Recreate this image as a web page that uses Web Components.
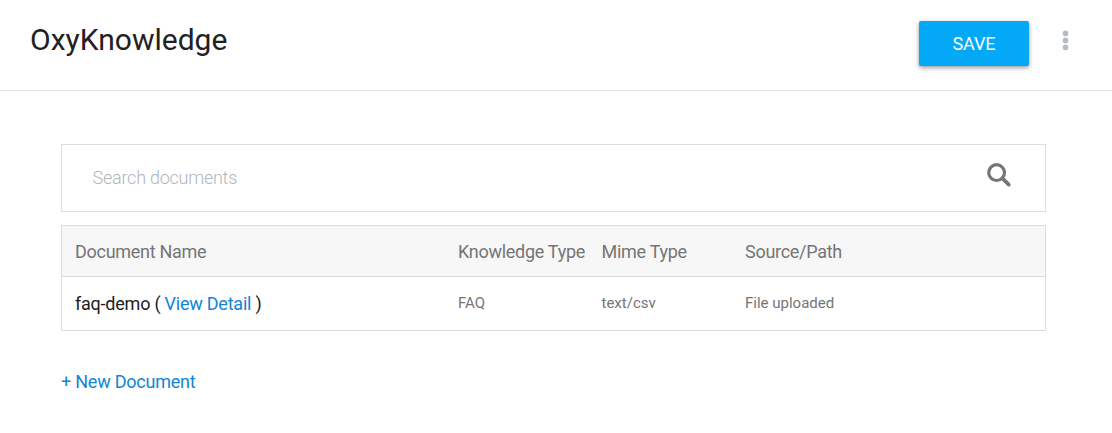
<!DOCTYPE html>
<html lang="en">
<head>
<meta charset="utf-8">
<title>OxyKnowledge</title>
<style>
body{margin:0;background:#fff;font-family:Roboto,"Liberation Sans",sans-serif;color:#212121;overflow:hidden}
knowledge-panel>action-link{margin-top:39px}
</style>
</head>
<body>
<app-header>OxyKnowledge
  <save-button slot="actions">SAVE</save-button>
  <more-menu slot="actions"></more-menu>
</app-header>
<knowledge-panel>
  <search-box></search-box>
  <document-table></document-table>
  <action-link>+ New Document</action-link>
</knowledge-panel>
<script>
const define = (name, html) => customElements.define(name, class extends HTMLElement {
  constructor() {
    super();
    this.attachShadow({ mode: 'open' }).innerHTML = html;
  }
});

define('app-header', `
<style>
:host{display:flex;box-sizing:border-box;height:91px;padding:21px 43px 0 30px;border-bottom:1px solid #e4e6e6;justify-content:space-between;align-items:flex-start}
h1{margin:0;font-size:30px;font-weight:400;line-height:37px}
.actions{display:flex;align-items:flex-start;gap:33px}
</style>
<h1><slot></slot></h1><div class="actions"><slot name="actions"></slot></div>`);

define('save-button', `
<style>
:host{display:block}
button{display:block;width:110px;height:45px;padding:0;border:0;border-radius:2px;background:#03a9f7;color:#fff;font:400 18px/45px Roboto,sans-serif;letter-spacing:-.1px;box-shadow:0 2px 5px rgba(0,0,0,.32),0 1px 3px rgba(0,0,0,.12)}
</style>
<button><slot></slot></button>`);

define('more-menu', `
<style>:host{display:block;margin-top:9px}svg{display:block}</style>
<svg width="7" height="20" fill="#b5bbc2" aria-label="More"><circle cx="3.5" cy="3.4" r="2.8"/><circle cx="3.5" cy="10.4" r="2.8"/><circle cx="3.5" cy="17.4" r="2.8"/></svg>`);

define('knowledge-panel', `
<style>:host{display:flex;flex-direction:column;align-items:stretch;padding:53px 66px 0 61px}</style><slot></slot>`);

define('search-box', `
<style>
:host{display:flex;box-sizing:border-box;height:68px;border:1px solid #dedede;padding:0 33px 0 30.6px;align-items:center;justify-content:space-between}
.field{font-size:18px;line-height:24px;font-weight:300;letter-spacing:-.25px;color:#b0b6bd}
svg{display:block;margin-top:-6px}
</style>
<span class="field" role="textbox">Search documents</span>
<svg width="25" height="24" fill="none" stroke="#757575" aria-label="Search"><circle cx="9.6" cy="9.6" r="7.9" stroke-width="3.2"/><path d="M15.4 15.4L21.8 21.6" stroke-width="3.6"/><path d="M20 19.8L22 21.8" stroke-width="3.2" stroke-linecap="round"/></svg>`);

define('document-table', `
<style>
:host{display:block;margin-top:13px;border:1px solid #dcdcdc;color:#757575}
.row{display:grid;grid-template-columns:383px 143.5px 143.5px 1fr;padding-left:13px;align-items:center;font-size:18px;line-height:24px;white-space:nowrap}
.head{box-sizing:border-box;height:51px;padding-top:2px;background:#f7f7f7;border-bottom:1px solid #dcdcdc;letter-spacing:-.28px}
.body{height:53px}
.small{font-size:15px;padding-bottom:2px}
.name{color:#212121;letter-spacing:-.23px}
</style>
<div class="row head"><span>Document Name</span><span>Knowledge Type</span><span>Mime Type</span><span>Source/Path</span></div>
<div class="row body"><span class="name">faq-demo ( <action-link>View Detail</action-link> )</span><span class="small">FAQ</span><span class="small">text/csv</span><span class="small">File uploaded</span></div>`);

define('action-link', `
<style>:host{display:inline;font-size:18px;line-height:24px;letter-spacing:-.23px}a{color:#1284d8;text-decoration:none}</style>
<a href="#"><slot></slot></a>`);
</script>
</body>
</html>
